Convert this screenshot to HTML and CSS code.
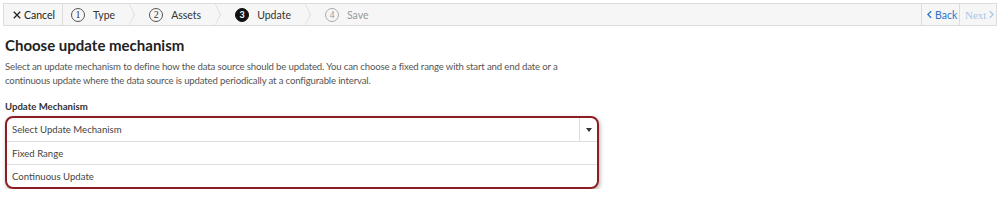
FILE: index.html
```html
<!DOCTYPE html>
<html>
<head>
<meta charset="utf-8">
<link rel="stylesheet" href="styles.css">
</head>
<body>
<div class="wizard">
  <button class="cancel"><svg class="x" viewBox="0 0 10 10" width="8" height="8"><path d="M1 1L9 9M9 1L1 9" stroke="#222" stroke-width="1.6"/></svg><span>Cancel</span></button>
  <div class="step first"><span class="num">1</span><span class="lbl">Type</span></div>
  <div class="chev"></div>
  <div class="step"><span class="num">2</span><span class="lbl">Assets</span></div>
  <div class="chev"></div>
  <div class="step active"><span class="num">3</span><span class="lbl">Update</span></div>
  <div class="chev"></div>
  <div class="step disabled"><span class="num">4</span><span class="lbl">Save</span></div>
  <div class="spacer"></div>
  <button class="nav back"><svg viewBox="0 0 6 10" width="5" height="9"><path d="M5 1L1 5L5 9" fill="none" stroke="#2a75c8" stroke-width="1.6"/></svg><span>Back</span></button>
  <button class="nav next"><span>Next</span><svg viewBox="0 0 6 10" width="5" height="9"><path d="M1 1L5 5L1 9" fill="none" stroke="#a9c6e6" stroke-width="1.6"/></svg></button>
</div>
<main class="content">
  <h1>Choose update mechanism</h1>
  <p class="desc">Select an update mechanism to define how the data source should be updated. You can choose a fixed range with start and end date or a continuous update where the data source is updated periodically at a configurable interval.</p>
  <label class="field-label">Update Mechanism</label>
  <div class="dropdown">
    <div class="row head"><span class="val">Select Update Mechanism</span><span class="caret"><svg viewBox="0 0 6 4" width="6" height="4"><path d="M0 0H6L3 4Z" fill="#333"/></svg></span></div>
    <div class="row">Fixed Range</div>
    <div class="row">Continuous Update</div>
  </div>
</main>
</body>
</html>
```
FILE: styles.css
```css
* { box-sizing: border-box; }
body { margin: 0; background: #fff; font-family: "Lato", "Noto Sans", sans-serif; color: #333; }
.wizard {
  margin: 3px 3px 0 3px;
  height: 23px;
  display: flex;
  align-items: stretch;
  background: #f6f6f6;
  border: 1px solid #dcdcdc;
  font-size: 10.5px;
}
button { font-family: inherit; font-size: 10.5px; background: none; border: none; padding: 0; cursor: pointer; }
.cancel {
  display: flex; align-items: center; gap: 3px;
  padding: 0 0 0 9px;
  width: 59px; flex: none;
  color: #222;
  border-right: 1px solid #dcdcdc;
}
.cancel svg, .nav svg { flex: none; }
.step { display: flex; align-items: center; padding-left: 11px; color: #333; flex: none; }
.step.first { padding-left: 8px; }
.num {
  width: 14px; height: 14px; border-radius: 50%;
  border: 1px solid #555; font-size: 10px; line-height: 12px; text-align: center;
  font-family: "Liberation Serif", serif; color: #333;
  margin-right: 8px; flex: none;
}
.step.active .num { background: #111; color: #fff; border-color: #111; font-family: "Lato", sans-serif; font-weight: 700; font-size: 9px; }
.step.disabled { color: #999; }
.step.disabled .num { border-color: #aaa; color: #999; }
.lbl { padding-right: 15px; }
.chev { width: 8px; position: relative; flex: none; }
.chev::before {
  content: ""; position: absolute; left: -8px; top: 3px;
  width: 14px; height: 14px; border-top: 1px solid #d6d6d6; border-right: 1px solid #d6d6d6;
  transform: scaleX(0.5) rotate(45deg);
}
.spacer { flex: 1; }
.nav { display: flex; align-items: center; gap: 3px; padding: 0 5px; border-left: 1px solid #dcdcdc; font-size: 10.5px; flex: none; }
.back { color: #2a75c8; width: 38px; }
.next { color: #a9c6e6; font-family: "Liberation Serif", serif; width: 37px; font-size: 11px; }
.content { padding: 0 5px; }
h1 { margin: 9px 0 0 0; font-size: 15px; font-weight: 700; color: #222; line-height: 20px; }
.desc { margin: 5px 0 0 0; font-size: 9.6px; letter-spacing: -0.15px; line-height: 14px; color: #555; max-width: 570px; }
.field-label { display: block; margin-top: 12px; font-size: 9.6px; font-weight: 700; color: #333; line-height: 14px; }
.dropdown {
  margin-top: 2px;
  width: 594px;
  border: 2px solid #8c1d22;
  border-radius: 8px;
  box-shadow: 1px 2px 4px rgba(0,0,0,0.3);
  overflow: hidden;
  font-size: 9.6px; color: #444;
}
.row { height: 23px; display: flex; align-items: center; padding-left: 5px; border-top: 1px solid #ddd; }
.row.head { border-top: none; height: 23px; }
.val { flex: 1; }
.caret { width: 18px; height: 100%; border-left: 1px solid #ddd; display: flex; align-items: center; justify-content: center; }
```
